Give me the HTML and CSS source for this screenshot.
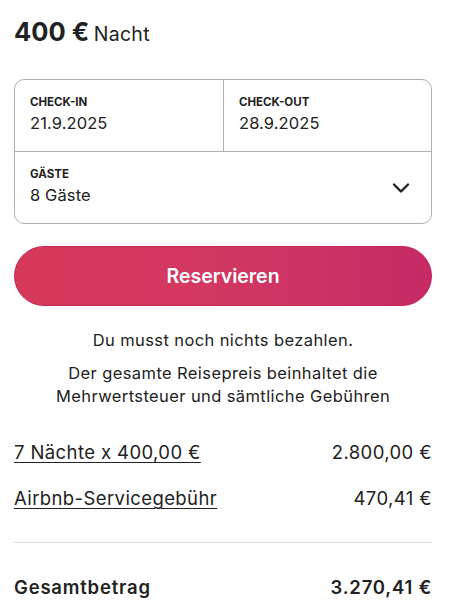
FILE: index.html
```html
<!DOCTYPE html>
<html lang="de">
<head>
<meta charset="utf-8">
<link rel="stylesheet" href="styles.css">
</head>
<body>
<div class="page">
  <div class="price"><span class="amount">400 €</span> <span class="per">Nacht</span></div>
  <div class="picker">
    <div class="dates">
      <div class="cell">
        <div class="label">CHECK-IN</div>
        <div class="value">21.9.2025</div>
      </div>
      <div class="cell cell-right">
        <div class="label">CHECK-OUT</div>
        <div class="value">28.9.2025</div>
      </div>
    </div>
    <div class="guests">
      <div class="cell">
        <div class="label">GÄSTE</div>
        <div class="value">8 Gäste</div>
      </div>
      <svg class="chevron" width="18" height="12" viewBox="0 0 18 12"><path d="M2 2.5 L9 9.5 L16 2.5" fill="none" stroke="#222" stroke-width="2.4" stroke-linecap="round" stroke-linejoin="round"/></svg>
    </div>
  </div>
  <button class="reserve">Reservieren</button>
  <p class="note">Du musst noch nichts bezahlen.</p>
  <p class="note note2">Der gesamte Reisepreis beinhaltet die<br>Mehrwertsteuer und sämtliche Gebühren</p>
  <div class="lines">
    <div class="row"><span class="link">7 Nächte x 400,00 €</span><span>2.800,00 €</span></div>
    <div class="row"><span class="link">Airbnb-Servicegebühr</span><span>470,41 €</span></div>
  </div>
  <div class="total row"><span>Gesamtbetrag</span><span>3.270,41 €</span></div>
</div>
</body>
</html>
```
FILE: styles.css
```css
* { box-sizing: border-box; }
body {
  margin: 0;
  font-family: Inter, "Noto Sans", sans-serif;
  color: #222;
  background: #fff;
}
.page {
  padding: 16px 18px 0 14px;
}
.price {
  line-height: 32px;
  height: 32px;
}
.amount {
  font-size: 25.5px;
  font-weight: 700;
}
.per {
  font-size: 19.5px;
  font-weight: 400;
  letter-spacing: 0.3px;
}
.picker {
  margin-top: 31px;
  border: 1px solid #b0b0b0;
  border-radius: 10px;
}
.dates {
  display: grid;
  grid-template-columns: 1fr 1fr;
  border-bottom: 1px solid #b0b0b0;
}
.cell {
  padding: 15px 15px 0 15px;
  height: 71px;
}
.cell-right {
  border-left: 1px solid #b0b0b0;
}
.label {
  font-size: 11.5px;
  font-weight: 700;
  line-height: 14px;
}
.value {
  font-size: 16.5px;
  line-height: 24px;
  margin-top: 2px;
  letter-spacing: 0.1px;
}
.guests {
  display: flex;
  justify-content: space-between;
  align-items: center;
  height: 71px;
}
.chevron {
  margin-right: 21px;
}
.reserve {
  display: block;
  width: 100%;
  margin-top: 22px;
  height: 60px;
  border: 1px solid #c9224f;
  border-radius: 30px;
  background: linear-gradient(to right, #d6385a 0%, #d33862 45%, #c62a66 100%);
  color: #fff;
  font-family: inherit;
  font-size: 19.5px;
  font-weight: 600;
}
.note {
  margin: 23px 0 0;
  text-align: center;
  font-size: 16.5px;
  line-height: 23px;
  letter-spacing: 0.4px;
}
.note2 {
  margin-top: 10px;
}
.lines {
  margin-top: 32px;
  padding-bottom: 32px;
  border-bottom: 1px solid #dddddd;
}
.row {
  display: flex;
  justify-content: space-between;
  font-size: 18.5px;
  line-height: 24px;
  letter-spacing: 0.4px;
  margin-bottom: 22px;
}
.row:last-child { margin-bottom: 0; }
.link {
  text-decoration: underline;
  text-underline-offset: 3px;
  text-decoration-thickness: 1px;
}
.total {
  margin-top: 32px;
  font-weight: 600;
  letter-spacing: 0.8px;
}
```
